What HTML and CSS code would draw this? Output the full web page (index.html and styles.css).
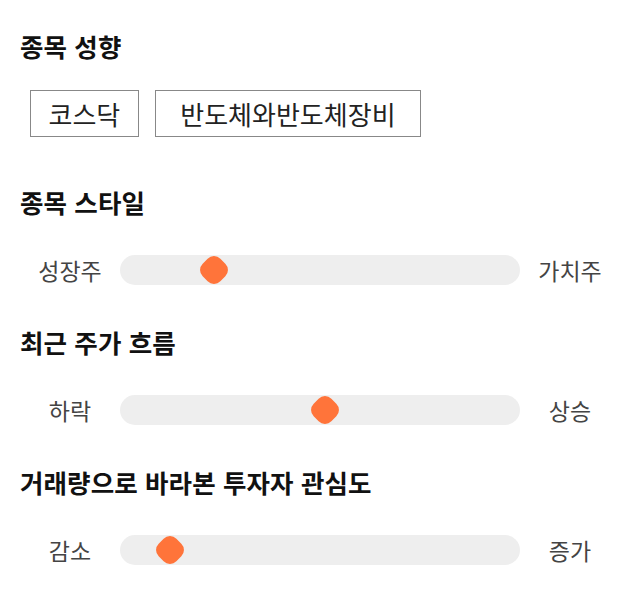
FILE: index.html
```html
<!DOCTYPE html>
<html lang="ko">
<head>
<meta charset="utf-8">
<link rel="stylesheet" href="styles.css">
</head>
<body>
<div class="page">
  <section class="block">
    <h2 class="title">종목 성향</h2>
    <div class="tags">
      <span class="tag">코스닥</span>
      <span class="tag tag-wide">반도체와반도체장비</span>
    </div>
  </section>
  <section class="block block-first-slider">
    <h2 class="title">종목 스타일</h2>
    <div class="slider-row">
      <span class="label">성장주</span>
      <div class="track"><span class="thumb" style="left: 23.6%"></span></div>
      <span class="label">가치주</span>
    </div>
  </section>
  <section class="block block-slider">
    <h2 class="title">최근 주가 흐름</h2>
    <div class="slider-row">
      <span class="label">하락</span>
      <div class="track"><span class="thumb" style="left: 51.25%"></span></div>
      <span class="label">상승</span>
    </div>
  </section>
  <section class="block block-slider">
    <h2 class="title">거래량으로 바라본 투자자 관심도</h2>
    <div class="slider-row">
      <span class="label">감소</span>
      <div class="track"><span class="thumb" style="left: 12.6%"></span></div>
      <span class="label">증가</span>
    </div>
  </section>
</div>
</body>
</html>
```

FILE: styles.css
```css
* { box-sizing: border-box; }
html, body { margin: 0; padding: 0; background: #fff; }
body {
  font-family: "Noto Sans CJK KR", "Noto Sans", sans-serif;
  color: #111;
}
.page {
  padding: 30px 20px 0 20px;
  width: 640px;
}
.title {
  margin: 0;
  font-size: 25.5px;
  font-weight: 700;
  line-height: 32px;
  color: #111;
  letter-spacing: 0.1px;
}
.tags {
  display: flex;
  gap: 16px;
  margin: 28px 0 0 10px;
}
.tag {
  display: inline-flex;
  align-items: center;
  height: 47px;
  padding: 0 17.5px;
  border: 1px solid #888;
  font-size: 26px;
  color: #222;
}
.tag-wide {
  padding: 0 24.5px;
}
.block-first-slider { margin-top: 49px; }
.block-slider { margin-top: 41px; }
.slider-row {
  display: flex;
  align-items: center;
  margin-top: 37px;
  height: 30px;
}
.label {
  width: 100px;
  text-align: center;
  font-size: 23px;
  color: #444;
}
.track {
  flex: 1;
  height: 30px;
  background: #eeeeee;
  border-radius: 15px;
  position: relative;
}
.thumb {
  position: absolute;
  top: 50%;
  width: 25px;
  height: 25px;
  background: #ff743a;
  border-radius: 9px;
  transform: translate(-50%, -50%) rotate(45deg);
}
```
